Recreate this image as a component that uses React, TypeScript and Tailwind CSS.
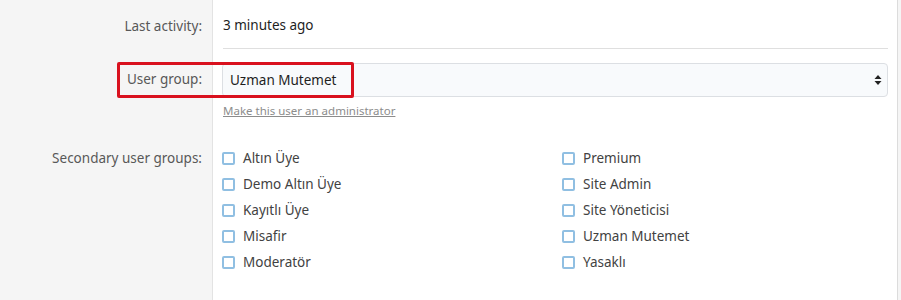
import React from "react";

const col1 = ["Altın Üye", "Demo Altın Üye", "Kayıtlı Üye", "Misafir", "Moderatör"];
const col2 = ["Premium", "Site Admin", "Site Yöneticisi", "Uzman Mutemet", "Yasaklı"];

function Check({ label }: { label: string }) {
  return (
    <label className="flex items-center h-[26px]">
      <span className="w-[13px] h-[13px] border-2 border-[#90bfe2] rounded-[2px] bg-white shrink-0" />
      <span className="ml-[8px] text-[13.5px] text-[#424242]">{label}</span>
    </label>
  );
}

export default function App() {
  return (
    <div
      className="relative w-[901px] h-[300px] bg-[#f5f5f5] overflow-hidden"
      style={{ fontFamily: '"Segoe UI", "Noto Sans", "Open Sans", sans-serif' }}
    >
      <div className="w-[898px] h-[300px] bg-white border-r border-[#dcdcdc] flex flex-col">
        {/* Row 1 */}
        <div className="flex h-[49px]">
          <div className="w-[213px] shrink-0 bg-[#f5f5f5] border-r border-[#e3e3e3] flex items-center justify-end pr-[10px] pt-[3px] text-[13.5px] text-[#585858]">
            Last activity:
          </div>
          <div className="flex-1 pl-[10px] pr-[9px]">
            <div className="h-[49px] border-b border-[#dfdfdf] flex items-center text-[13.5px] text-[#1e1e1e] pt-[2px]">
              3 minutes ago
            </div>
          </div>
        </div>
        {/* Row 2 */}
        <div className="flex h-[80px]">
          <div className="w-[213px] shrink-0 bg-[#f5f5f5] border-r border-[#e3e3e3] pt-[14px] flex justify-end pr-[10px]">
            <div className="h-[33px] flex items-center text-[13.5px] text-[#585858]">User group:</div>
          </div>
          <div className="flex-1 pl-[9px] pr-[9px] pt-[14px]">
            <div className="h-[34px] rounded-[4px] border border-[#dcdfe3] bg-[#f8fafc] flex items-center justify-between pl-[7px] pr-[5px] text-[13.5px] text-[#1e1e1e]">
              <span>Uzman Mutemet</span>
              <svg width="8" height="12" viewBox="0 0 8 12">
                <path d="M4 1 L7.5 5 L0.5 5 Z" fill="#222" />
                <path d="M4 11 L7.5 7 L0.5 7 Z" fill="#222" />
              </svg>
            </div>
            <div className="mt-[6px] ml-[1px] text-[11.5px] text-[#8c8c8c] underline leading-[16px]">
              Make this user an administrator
            </div>
          </div>
        </div>
        {/* Row 3 */}
        <div className="flex flex-1">
          <div className="w-[213px] shrink-0 bg-[#f5f5f5] border-r border-[#e3e3e3] pt-[16px] flex justify-end pr-[10px]">
            <div className="h-[26px] flex items-center text-[13.5px] text-[#585858]">Secondary user groups:</div>
          </div>
          <div className="flex-1 pl-[9px] pt-[16px] grid grid-cols-[340px_1fr]">
            <div className="flex flex-col">
              {col1.map((l) => (
                <Check key={l} label={l} />
              ))}
            </div>
            <div className="flex flex-col">
              {col2.map((l) => (
                <Check key={l} label={l} />
              ))}
            </div>
          </div>
        </div>
      </div>
      <div className="absolute left-[117px] top-[62px] w-[237px] h-[36px] border-[3px] border-[#d9111e] rounded-[2px] pointer-events-none" />
    </div>
  );
}
